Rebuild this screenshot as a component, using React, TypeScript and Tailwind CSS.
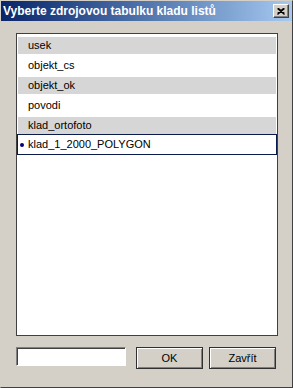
import type { FC } from 'react';

const tables = [
  { name: 'usek', shaded: true },
  { name: 'objekt_cs', shaded: false },
  { name: 'objekt_ok', shaded: true },
  { name: 'povodi', shaded: false },
  { name: 'klad_ortofoto', shaded: true },
];

const selectedTable = 'klad_1_2000_POLYGON';

const CloseButton: FC = () => (
  <button className="flex h-[14px] w-[16px] items-center justify-center border border-t-white border-l-white border-r-[#404040] border-b-[#404040] bg-[#d4d0c8] shadow-[inset_-1px_-1px_#808080]">
    <svg width="8" height="7" viewBox="0 0 8 7">
      <path d="M0.5 0.5 L7.5 6.5 M1.5 0.5 L7.5 5.5 M7.5 0.5 L0.5 6.5 M6.5 0.5 L0.5 5.5" stroke="#000" strokeWidth="1.2" fill="none" />
    </svg>
  </button>
);

const DialogButton: FC<{ label: string }> = ({ label }) => (
  <button className="flex h-[22px] w-[67px] items-center justify-center border border-[#303030] bg-[#d4d0c8] text-[11px] text-black shadow-[inset_1px_1px_#ffffff,inset_-1px_-1px_#808080]">
    {label}
  </button>
);

export default function App() {
  return (
    <div
      className="flex h-[388px] w-[293px] flex-col border border-t-[#d4d0c8] border-l-[#d4d0c8] border-r-[#404040] border-b-[#404040] bg-[#d4d0c8] font-['Liberation_Sans',Arial,sans-serif]"
    >
      {/* Title bar */}
      <div className="flex h-[20px] flex-none items-center justify-between bg-gradient-to-r from-[#0a246a] to-[#a6caf0] pr-[3px] pl-[2px]">
        <span className="text-[12px] font-bold text-white">Vyberte zdrojovou tabulku kladu listů</span>
        <CloseButton />
      </div>

      <div className="flex flex-1 flex-col pt-[12px] pr-[14px] pl-[15px]">
        {/* Table list */}
        <div className="h-[303px] border border-[#404040] bg-white px-[1px] pt-[3px] text-[11px] text-black">
          {tables.map((t) =>
            t.shaded ? (
              <div key={t.name} className="flex h-[17px] items-center bg-[#d6d6d6] pl-[10px]">
                {t.name}
              </div>
            ) : (
              <div key={t.name} className="flex h-[23px] items-center pl-[10px]">
                {t.name}
              </div>
            )
          )}
          <div className="-mx-[1px] flex h-[21px] items-center border border-[#0a1a4a] bg-white">
            <span className="ml-[2px] h-[4px] w-[4px] rounded-full bg-[#000080]" />
            <span className="ml-[4px]">{selectedTable}</span>
          </div>
        </div>

        {/* Bottom row */}
        <div className="mt-[11px] flex items-start">
          <input
            className="h-[19px] w-[110px] border border-t-[#808080] border-l-[#808080] border-r-white border-b-white bg-white text-[11px] shadow-[inset_1px_1px_#404040] outline-none"
            defaultValue=""
          />
          <div className="ml-[10px] flex gap-[6px]">
            <DialogButton label="OK" />
            <DialogButton label="Zavřít" />
          </div>
        </div>
      </div>
    </div>
  );
}
